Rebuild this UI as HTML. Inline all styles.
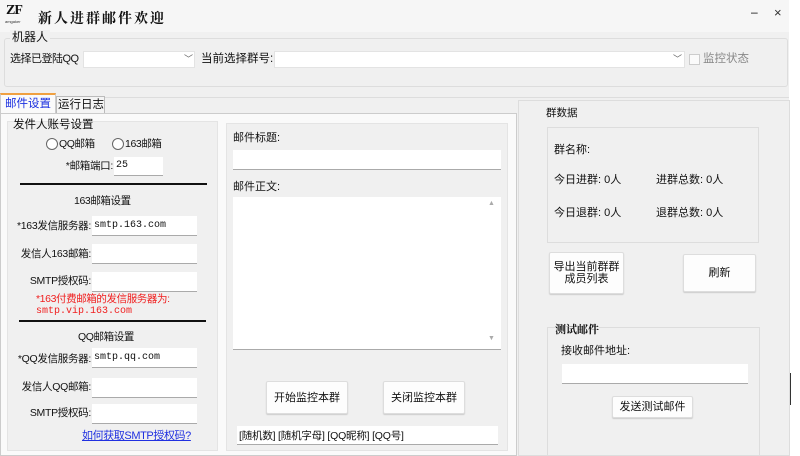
<!DOCTYPE html>
<html><head><meta charset="utf-8"><style>
*{margin:0;padding:0;box-sizing:border-box}
body{width:800px;height:456px;overflow:hidden;background:#fff;font-family:"Liberation Sans","Noto Sans CJK SC",sans-serif;font-size:11px;color:#111;position:relative}
.a{position:absolute;white-space:nowrap}
.t{position:absolute;white-space:nowrap;line-height:14px}
.r{position:absolute;white-space:nowrap;line-height:14px;text-align:right;font-size:10.5px;letter-spacing:-0.3px}
.in{position:absolute;background:#fff;border-bottom:1px solid #aaa}
.btn{position:absolute;background:#fdfdfd;border:1px solid #ddd;border-radius:2px;box-shadow:0 1px 1px #ccc;display:flex;align-items:center;justify-content:center;text-align:center;line-height:12px;font-size:11px}
.mono{font-family:"Liberation Mono","Noto Sans CJK SC",monospace;font-size:10px}
.hr{position:absolute;height:2px;background:#111}
</style></head><body>
<div class="a" style="left:0;top:0;width:789px;height:456px;background:#f0f0f0"></div>
<div class="a" style="left:0;top:0;width:789px;height:32px;background:#f6f6f6"></div>
<div class="a" style="left:6px;top:3px;font:bold 14px 'Liberation Serif',serif;letter-spacing:-1px">ZF</div>
<div class="a" style="left:5px;top:19px;font-size:4px;color:#333">amgaker</div>
<div class="a" style="left:38px;top:8px;font:bold 14px 'Noto Serif CJK SC',serif;letter-spacing:2px">新人进群邮件欢迎</div>
<div class="a" style="left:751px;top:5px;font-size:12px">–</div>
<div class="a" style="left:774px;top:5px;font-size:13px;color:#333">×</div>
<div class="a" style="left:4px;top:38px;width:784px;height:49px;border:1px solid #ddd;border-radius:3px"></div>
<div class="t" style="left:10px;top:30px;background:#f0f0f0;padding:0 2px;font-size:12px">机器人</div>
<div class="t" style="left:10px;top:52px;font-size:11px;letter-spacing:-0.5px">选择已登陆QQ</div>
<div class="in" style="left:83px;top:51px;width:112px;height:17px;border:1px solid #e3e3e3"></div>
<div class="a" style="left:184px;top:52px;font-size:9px;color:#666">﹀</div>
<div class="t" style="left:201px;top:52px;font-size:11.5px">当前选择群号:</div>
<div class="in" style="left:274px;top:51px;width:411px;height:17px;border:1px solid #e3e3e3"></div>
<div class="a" style="left:673px;top:52px;font-size:9px;color:#666">﹀</div>
<div class="a" style="left:689px;top:54px;width:11px;height:11px;border:1px solid #ccc;background:#fafafa"></div>
<div class="t" style="left:703px;top:52px;font-size:11.5px;color:#888">监控状态</div>
<div class="a" style="left:0;top:97px;width:789px;height:1px;background:#ddd"></div>
<div class="a" style="left:0;top:93px;width:56px;height:21px;background:#fafafa;border:1px solid #ccc;border-top:2px solid #f0a040;border-bottom:none"></div>
<div class="t" style="left:5px;top:97px;color:#1b30e0;font-size:11.5px">邮件设置</div>
<div class="a" style="left:56px;top:96px;width:49px;height:18px;background:#f4f4f4;border:1px solid #bbb;border-bottom:none"></div>
<div class="t" style="left:58px;top:98px;font-size:11.5px">运行日志</div>
<div class="a" style="left:0;top:113px;width:517px;height:343px;background:#fafafa;border:1px solid #ccc"></div>
<div class="a" style="left:7px;top:121px;width:211px;height:330px;background:#f0f0f0;border:1px solid #e4e4e4"></div>
<div class="t" style="left:13px;top:118px;font-size:11.5px">发件人账号设置</div>
<div class="a" style="left:46px;top:138px;width:12px;height:12px;border:1px solid #666;border-radius:50%;background:#fff"></div>
<div class="t" style="left:59px;top:137px;font-size:10.5px;letter-spacing:-0.4px">QQ邮箱</div>
<div class="a" style="left:112px;top:138px;width:12px;height:12px;border:1px solid #666;border-radius:50%;background:#fff"></div>
<div class="t" style="left:125px;top:137px;font-size:10.5px;letter-spacing:-0.4px">163邮箱</div>
<div class="r" style="left:40px;width:73px;top:159px">*邮箱端口:</div>
<div class="in" style="left:114px;top:157px;width:49px;height:19px"></div>
<div class="t mono" style="left:116px;top:159px">25</div>
<div class="hr" style="left:20px;top:183px;width:187px"></div>
<div class="t" style="left:74px;top:194px;font-size:10.5px;letter-spacing:-0.4px">163邮箱设置</div>
<div class="r" style="left:0;width:91px;top:219px">*163发信服务器:</div>
<div class="in" style="left:92px;top:216px;width:105px;height:20px"></div>
<div class="t mono" style="left:94px;top:219px">smtp.163.com</div>
<div class="r" style="left:0;width:91px;top:247px">发信人163邮箱:</div>
<div class="in" style="left:92px;top:244px;width:105px;height:20px"></div>
<div class="r" style="left:0;width:91px;top:274px">SMTP授权码:</div>
<div class="in" style="left:92px;top:272px;width:105px;height:20px"></div>
<div class="t" style="left:36px;top:294px;color:#f02020;line-height:11px;font-size:10.5px;letter-spacing:-0.4px">*163付费邮箱的发信服务器为:</div>
<div class="t mono" style="left:36px;top:306px;color:#f02020;line-height:11px">smtp.vip.163.com</div>
<div class="hr" style="left:19px;top:320px;width:187px"></div>
<div class="t" style="left:78px;top:330px;font-size:10.5px;letter-spacing:-0.4px">QQ邮箱设置</div>
<div class="r" style="left:0;width:91px;top:352px">*QQ发信服务器:</div>
<div class="in" style="left:92px;top:348px;width:105px;height:20px"></div>
<div class="t mono" style="left:94px;top:351px">smtp.qq.com</div>
<div class="r" style="left:0;width:91px;top:380px">发信人QQ邮箱:</div>
<div class="in" style="left:92px;top:378px;width:105px;height:20px"></div>
<div class="r" style="left:0;width:91px;top:406px">SMTP授权码:</div>
<div class="in" style="left:92px;top:404px;width:105px;height:20px"></div>
<div class="t" style="left:82px;top:429px;color:#2030e0;text-decoration:underline;font-size:11px;letter-spacing:-0.4px">如何获取SMTP授权码?</div>
<div class="a" style="left:226px;top:123px;width:282px;height:328px;background:#f0f0f0;border:1px solid #e4e4e4"></div>
<div class="t" style="left:233px;top:131px">邮件标题:</div>
<div class="in" style="left:233px;top:150px;width:268px;height:20px"></div>
<div class="t" style="left:233px;top:180px">邮件正文:</div>
<div class="in" style="left:233px;top:197px;width:268px;height:153px"></div>
<div class="a" style="left:488px;top:200px;font-size:7px;color:#aaa">▲</div>
<div class="a" style="left:488px;top:335px;font-size:7px;color:#aaa">▼</div>
<div class="btn" style="left:266px;top:381px;width:82px;height:33px">开始监控本群</div>
<div class="btn" style="left:383px;top:381px;width:82px;height:33px">关闭监控本群</div>
<div class="in" style="left:237px;top:426px;width:261px;height:19px"></div>
<div class="t" style="left:239px;top:429px;font-size:10.5px;letter-spacing:-0.2px">[随机数] [随机字母] [QQ昵称] [QQ号]</div>
<div class="a" style="left:518px;top:100px;width:272px;height:356px;border:1px solid #ddd;background:#f0f0f0"></div>
<div class="t" style="left:546px;top:106px;font-size:10.5px">群数据</div>
<div class="a" style="left:547px;top:127px;width:212px;height:116px;border:1px solid #ddd"></div>
<div class="t" style="left:554px;top:143px">群名称:</div>
<div class="t" style="left:554px;top:173px">今日进群: 0人</div>
<div class="t" style="left:656px;top:173px">进群总数: 0人</div>
<div class="t" style="left:554px;top:206px">今日退群: 0人</div>
<div class="t" style="left:656px;top:206px">退群总数: 0人</div>
<div class="btn" style="left:549px;top:252px;width:75px;height:42px">导出当前群群<br>成员列表</div>
<div class="btn" style="left:683px;top:254px;width:73px;height:38px">刷新</div>
<div class="a" style="left:547px;top:327px;width:213px;height:129px;border:1px solid #ddd"></div>
<div class="t" style="left:555px;top:322px;font-weight:bold;font-family:'Noto Serif CJK SC',serif;background:#f0f0f0">测试邮件</div>
<div class="t" style="left:561px;top:344px">接收邮件地址:</div>
<div class="in" style="left:562px;top:364px;width:186px;height:20px"></div>
<div class="btn" style="left:612px;top:396px;width:81px;height:22px">发送测试邮件</div>
<div class="a" style="left:790px;top:373px;width:1px;height:32px;background:#333"></div>
</body></html>
